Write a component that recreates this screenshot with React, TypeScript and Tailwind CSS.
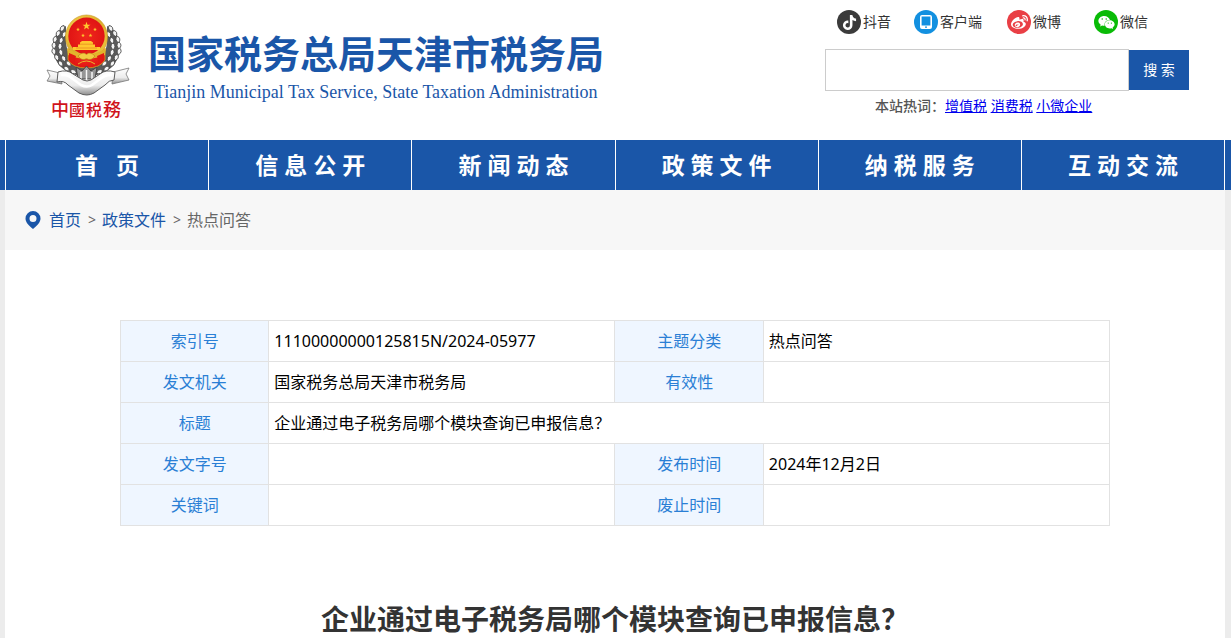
import type { ReactNode } from "react";
import { FaTiktok, FaWeibo, FaWeixin } from "react-icons/fa";

const GRAINS: [number, number, number][] = [
  [22, 24, 30], [18, 29, 22], [15, 35, 12], [14, 41, 2], [14, 47, -10], [17, 53, -22], [21, 59, -36], [27, 64, -50], [34, 67, -64],
  [24, 30, 24], [21, 36, 14], [20, 42, 2], [21, 48, -12], [24, 54, -26], [29, 59, -44],
];

function WheatSide() {
  return (
    <g>
      <path d="M26 21C12 27 9 46 19 60C27 69 38 71 46 71L46 60C34 58 27 49 26 38Z" fill="#5a5a5a" />
      {GRAINS.map(([x, y, r]) => (
        <g key={`${x}-${y}`} transform={`rotate(${r} ${x} ${y})`}>
          <path
            d={`M${x} ${y - 4}Q${x - 4} ${y - 1} ${x} ${y + 3}Q${x + 4} ${y - 1} ${x} ${y - 4}Z`}
            fill="#f4f4f4"
            stroke="#444"
            strokeWidth=".8"
          />
        </g>
      ))}
    </g>
  );
}

function Star({ x, y, s }: { x: number; y: number; s: number }) {
  return (
    <path
      transform={`translate(${x} ${y}) scale(${s})`}
      d="M0-10L2.4-3.2L9.5-3.1L3.8 1.2L5.9 8.1L0 4L-5.9 8.1L-3.8 1.2L-9.5-3.1L-2.4-3.2Z"
      fill="#ffc72e"
    />
  );
}

function Emblem() {
  return (
    <svg viewBox="0 0 100 125" className="h-[125px] w-[100px] shrink-0" role="img" aria-label="中国税务">
      <defs>
        <linearGradient id="gold" x1="0" y1="0" x2="1" y2="1">
          <stop offset="0" stopColor="#f3d04c" />
          <stop offset=".5" stopColor="#dcae2c" />
          <stop offset="1" stopColor="#efc944" />
        </linearGradient>
        <linearGradient id="silver" x1="0" y1="0" x2="0" y2="1">
          <stop offset="0" stopColor="#ffffff" />
          <stop offset=".6" stopColor="#ececec" />
          <stop offset="1" stopColor="#8d8d8d" />
        </linearGradient>
        <radialGradient id="red">
          <stop offset="0" stopColor="#f0281c" />
          <stop offset="1" stopColor="#e01414" />
        </radialGradient>
      </defs>
      <WheatSide />
      <g transform="translate(93 0) scale(-1 1)">
        <WheatSide />
      </g>
      <path d="M28 44L28 55Q33 63 46.500 63Q60 63 65 55L65 44Z" fill="url(#red)" stroke="#d6a21e" strokeWidth=".8" />
      <ellipse cx="46.500" cy="32" rx="21" ry="22" fill="url(#gold)" stroke="#c8921a" strokeWidth=".6" />
      <ellipse cx="46.500" cy="31" rx="18.200" ry="18.500" fill="url(#red)" />
      <Star x={46.5} y={21} s={0.42} />
      <Star x={38} y={24.5} s={0.2} />
      <Star x={55} y={24.5} s={0.2} />
      <Star x={43} y={30.5} s={0.2} />
      <Star x={50.5} y={30.5} s={0.2} />
      <path d="M40 37.500L42 36H51L53 37.500V39.500H55V42H60V45H33V42H38V39.500H40Z" fill="#ffc72e" />
      <path d="M40 39.200H53M36 43H57" stroke="#e07a1c" strokeWidth=".6" />
      <path d="M27 43Q37 50 46.500 49Q56 50 66 43L65 50Q56 55 46.500 52Q37 55 28 50Z" fill="#e3b42c" />
      <path d="M29 48L36 51L34 59L29 54ZM64 48L57 51L59 59L64 54Z" fill="#e01a14" />
      <path d="M38 51Q43 46 46.500 49.500Q50 46 55 51Q51 56.500 46.500 53.500Q42 56.500 38 51Z" fill="#f2cb43" stroke="#b87c16" strokeWidth=".6" />
      <path d="M38 59Q46.500 53 55 59" stroke="#e9b730" strokeWidth="1" fill="none" />
      <path d="M36 62L42 66L46.500 61L51 66L57 62L55 74H38Z" fill="#969696" stroke="#444" strokeWidth="1" />
      <path d="M41 67V74M46.500 65V76M52 67V74" stroke="#f7f7f7" strokeWidth="1.500" />
      <path d="M20 68L7 65L10 71L7 76L22 79Z" fill="url(#silver)" stroke="#777" strokeWidth=".8" />
      <path d="M73 67L89 63L86 69L89 75L72 79Z" fill="url(#silver)" stroke="#777" strokeWidth=".8" />
      <path
        d="M18 67Q27 64 33 69L43 75Q47 77 51 75L60 69Q66 64 75 67L74 75Q69 75 65 80L54 88Q47 92 39 88L28 80Q24 75 17 77Z"
        fill="url(#silver)"
        stroke="#5d5d5d"
        strokeWidth="1"
      />
      <path d="M21 70Q28 69 33 74L41 80Q47 83 52 80L60 74Q66 69 72 70" fill="none" stroke="#fff" strokeWidth="2.600" />
      <g fill="#d0121b" fontFamily="Noto Sans CJK TC, sans-serif" fontWeight="500">
        <text x="11" y="111" fontSize="18">中</text>
        <text x="29" y="111" fontSize="16">國</text>
        <text x="46" y="111" fontSize="16">税</text>
        <text x="63" y="111" fontSize="18">務</text>
      </g>
    </svg>
  );
}

function Social({ label, color, children }: { label: string; color: string; children: ReactNode }) {
  return (
    <a href="#" className="flex items-center gap-0.5 text-sm text-[#333]">
      <span className={`flex size-6 shrink-0 items-center justify-center rounded-full text-white ${color}`}>
        {children}
      </span>
      {label}
    </a>
  );
}

const NAV = ["首\u00a0\u00a0\u00a0页", "信 息 公 开", "新 闻 动 态", "政 策 文 件", "纳 税 服 务", "互 动 交 流"];

const ROWS: string[][] = [
  ["索引号", "11100000000125815N/2024-05977", "主题分类", "热点问答"],
  ["发文机关", "国家税务总局天津市税务局", "有效性", ""],
  ["标题", "企业通过电子税务局哪个模块查询已申报信息？"],
  ["发文字号", "", "发布时间", "2024年12月2日"],
  ["关键词", "", "废止时间", ""],
];

export default function App() {
  return (
    <div lang="zh-CN" className="min-h-screen bg-[#ececec] font-['Noto_Sans','Noto_Sans_CJK_SC',sans-serif] text-black">
      <header className="bg-white">
        <div className="flex h-[140px] justify-between pr-[42px] pl-10">
          <div className="flex pt-[5px]">
            <Emblem />
            <div className="pt-[23px] pl-2 whitespace-nowrap text-[#1a56a8]">
              <h1 className="text-[38px] leading-[50px] font-bold">国家税务总局天津市税务局</h1>
              <p className="pl-1.5 font-['Liberation_Serif',serif] text-[18px] leading-7">
                Tianjin Municipal Tax Service, State Taxation Administration
              </p>
            </div>
          </div>
          <div className="w-[364px] shrink-0 pt-2.5">
            <div className="grid grid-cols-[77px_93px_87px_auto] pl-3 whitespace-nowrap">
              <Social label="抖音" color="bg-[#3b3b3b]">
                <FaTiktok size={15} />
              </Social>
              <Social label="客户端" color="bg-[#1290e0]">
                <svg viewBox="0 0 24 24" className="size-6" aria-hidden="true">
                  <path
                    fillRule="evenodd"
                    fill="#fff"
                    d="M8 5h8a2 2 0 0 1 2 2v10a2 2 0 0 1-2 2H8a2 2 0 0 1-2-2V7a2 2 0 0 1 2-2ZM7.6 6.6v8.8h8.8V6.6ZM11 16.4v1.4h2v-1.4Z"
                  />
                </svg>
              </Social>
              <Social label="微博" color="bg-[#e93f45]">
                <FaWeibo size={17} />
              </Social>
              <Social label="微信" color="bg-[#09bb07]">
                <FaWeixin size={17} />
              </Social>
            </div>
            <form className="mt-[15px] flex items-center" onSubmit={(e) => e.preventDefault()}>
              <input
                type="text"
                aria-label="搜索"
                className="h-[42px] min-w-0 flex-1 border border-[#ccc] bg-white px-2 text-sm outline-none"
              />
              <button type="submit" className="h-10 w-[60px] bg-[#1a56a8] text-sm text-white">
                搜 索
              </button>
            </form>
            <p className="pt-[3px] pl-[50px] text-sm leading-6 whitespace-nowrap text-[#00e]">
              <span className="font-medium text-[#555]">本站热词：</span>
              <a href="#" className="underline">增值税</a>{" "}
              <a href="#" className="underline">消费税</a>{" "}
              <a href="#" className="underline">小微企业</a>
            </p>
          </div>
        </div>
        <nav className="bg-[#1a56a8] pr-1.5 pl-[5px]">
          <ul className="flex border-l border-white">
            {NAV.map((item) => (
              <li key={item} className="flex-1 border-r border-white">
                <a href="#" className="block text-center text-[23px] leading-[50px] font-bold text-white">
                  {item}
                </a>
              </li>
            ))}
          </ul>
        </nav>
      </header>

      <div className="pr-1.5 pl-[5px]">
        <div className="flex h-[60px] items-center bg-[#f7f7f7] pl-5 text-base text-[#666]">
          <svg viewBox="0 0 16 18" className="mr-2 h-[18px] w-4" aria-hidden="true">
            <path
              fillRule="evenodd"
              fill="#1a56a8"
              d="M8 0a7.5 7.5 0 0 1 7.5 7.5c0 4-3.500 7-7.500 10.500C4 14.500.500 11.500.500 7.500A7.500 7.500 0 0 1 8 0Zm0 4a3.500 3.500 0 1 0 0 7 3.500 3.500 0 0 0 0-7Z"
            />
          </svg>
          <a href="#" className="text-[#1a56a8]">首页</a>
          <span className="pr-1.5 pl-[7px] text-sm">&gt;</span>
          <a href="#" className="text-[#1a56a8]">政策文件</a>
          <span className="pr-1.5 pl-[7px] text-sm">&gt;</span>
          <span>热点问答</span>
        </div>
        <main className="bg-white pt-[70px]">
          <table className="mx-auto w-full max-w-[990px] table-fixed border-collapse text-base">
            <colgroup>
              <col className="w-[15%]" />
              <col className="w-[35%]" />
              <col className="w-[15%]" />
              <col className="w-[35%]" />
            </colgroup>
            <tbody>
              {ROWS.map((row) => (
                <tr key={row[0]} className="h-[41px]">
                  {row.map((cell, i) =>
                    i % 2 === 0 ? (
                      <th key={i} scope="row" className="border border-[#e2e2e2] bg-[#eff6ff] font-normal text-[#2a7fd5]">
                        {cell}
                      </th>
                    ) : (
                      <td key={i} colSpan={row.length === 2 ? 3 : 1} className="border border-[#e2e2e2] px-[5px]">
                        {cell}
                      </td>
                    ),
                  )}
                </tr>
              ))}
            </tbody>
          </table>
          <h2 className="pt-[74px] text-center text-[28px] leading-[38px] font-bold text-[#333]">
            企业通过电子税务局哪个模块查询已申报信息？
          </h2>
        </main>
      </div>
    </div>
  );
}
